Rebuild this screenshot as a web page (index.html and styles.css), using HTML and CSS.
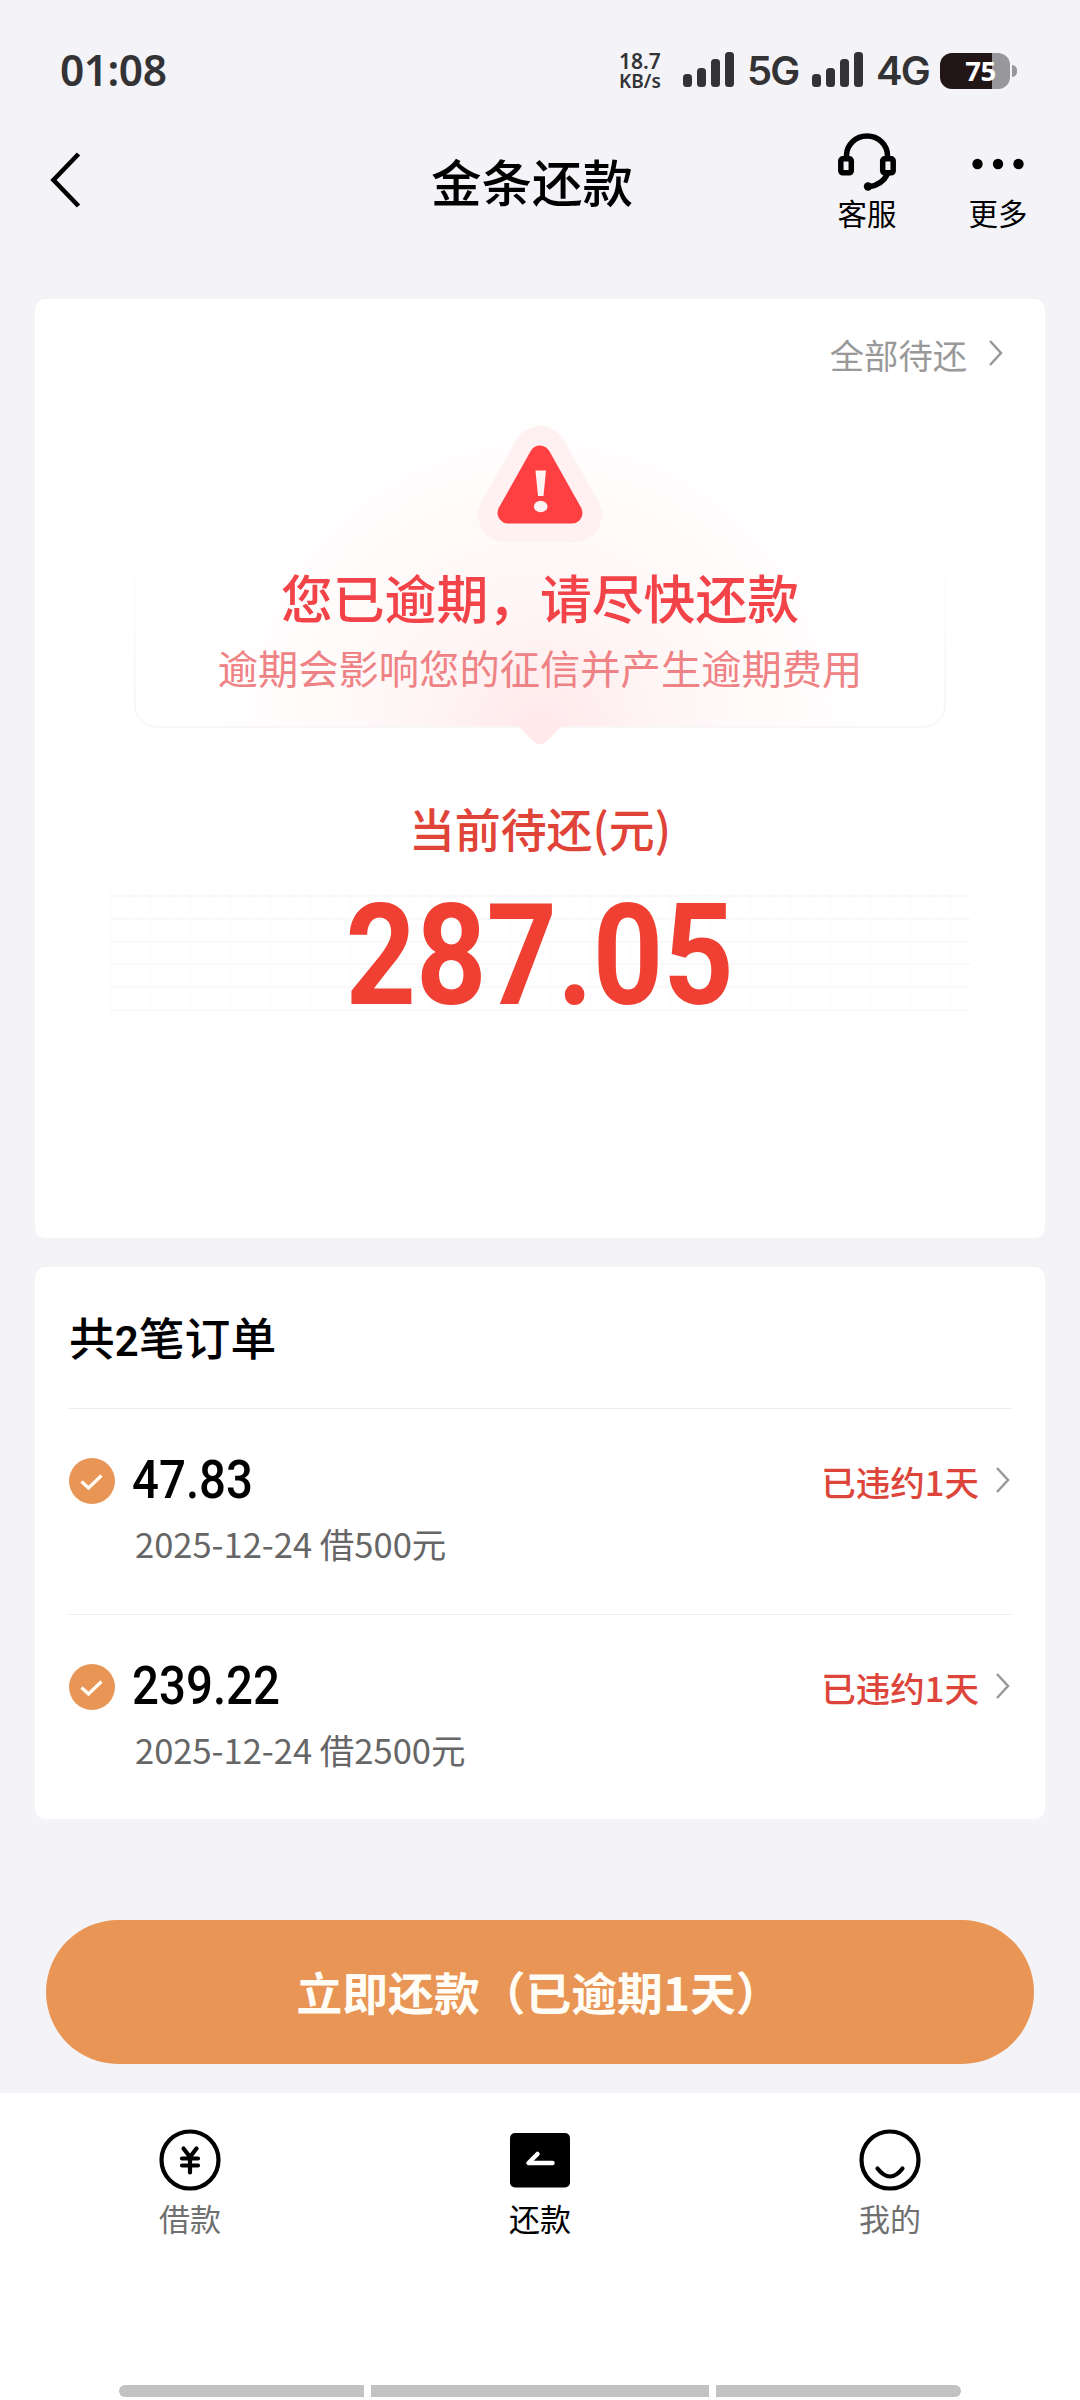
FILE: index.html
```html
<!DOCTYPE html>
<html lang="zh-CN">
<head>
<meta charset="utf-8">
<title>金条还款</title>
<link rel="stylesheet" href="styles.css">
</head>
<body>
<div class="app">
  <div class="status-bar">
    <span class="clock">01:08</span>
    <span class="net-speed"><span>18.7</span><span class="unit">KB/s</span></span>
    <svg class="signal" width="51" height="36" viewBox="0 0 51 36"><g fill="#333336"><rect x="0" y="22" width="9" height="13" rx="3.5"/><rect x="14" y="16" width="9" height="19" rx="3.5"/><rect x="28" y="7" width="9" height="28" rx="3.5"/><rect x="42" y="0" width="9" height="35" rx="3.5"/></g></svg>
    <span class="net-type">5G</span>
    <svg class="signal second" width="51" height="36" viewBox="0 0 51 36"><g fill="#333336"><rect x="0" y="22" width="9" height="13" rx="3.5"/><rect x="14" y="16" width="9" height="19" rx="3.5"/><rect x="28" y="7" width="9" height="28" rx="3.5"/><rect x="42" y="0" width="9" height="35" rx="3.5"/></g></svg>
    <span class="net-type">4G</span>
    <span class="battery"><span class="battery-level">75</span></span>
    <span class="battery-tip"></span>
  </div>

  <header class="nav">
    <svg class="back" width="32" height="56" viewBox="0 0 32 56"><path d="M28.500 2 3.500 28l25 26" fill="none" stroke="#000" stroke-width="4.600"/></svg>
    <h1 class="nav-title">金条还款</h1>
    <div class="nav-action service">
      <svg width="60" height="60" viewBox="0 0 60 60" fill="none" stroke="#000" stroke-width="5.500"><path d="M9.500 25v-1.500a20.500 19.500 0 0 1 41 0V25"/><rect x="3.800" y="26.800" width="10.500" height="14" rx="2"/><rect x="45.700" y="26.800" width="10.500" height="14" rx="2"/><path d="M50.500 42C47 49 41 53.500 32 54.800"/><circle cx="31" cy="54.500" r="4.200" fill="#000" stroke="none"/></svg>
      <span>客服</span>
    </div>
    <div class="nav-action more">
      <svg width="60" height="60" viewBox="0 0 60 60"><circle cx="9.500" cy="32" r="5.200"/><circle cx="30" cy="32" r="5.200"/><circle cx="50.500" cy="32" r="5.200"/></svg>
      <span>更多</span>
    </div>
  </header>

  <section class="card summary">
    <a class="all-due">全部待还<svg width="16" height="28" viewBox="0 0 16 28"><path d="M2 2l11 12L2 26" fill="none" stroke="#999" stroke-width="2.500"/></svg></a>
    <div class="alert">
      <svg class="alert-bg" width="820" height="334" viewBox="0 0 820 334">
        <defs>
          <radialGradient id="glow" gradientUnits="userSpaceOnUse" cx="410" cy="322" r="340">
            <stop offset="0" stop-color="#ffe8ea"/><stop offset=".35" stop-color="#fff5f5"/><stop offset=".7" stop-color="#fffbfb"/><stop offset="1" stop-color="#fff"/>
          </radialGradient>
          <linearGradient id="edge" x1="0" y1="0" x2="0" y2="1"><stop offset="0" stop-color="#f8f7f7" stop-opacity="0"/><stop offset="1" stop-color="#f8f6f6"/></linearGradient>
        </defs>
        <path d="M5 0h810v294a22 22 0 0 1-22 22H431l-15 15q-6 5-12 0l-15-15H27a22 22 0 0 1-22-22z" fill="url(#glow)"/>
        <path d="M5 120v174a22 22 0 0 0 22 22H389M431 316H793a22 22 0 0 0 22-22V120" fill="none" stroke="url(#edge)" stroke-width="2"/>
      </svg>
      <svg class="alert-icon" width="124" height="118" viewBox="0 0 124 118">
        <path d="M62 27 27 89h70z" fill="#fff0f1" stroke="#fff0f1" stroke-width="54" stroke-linejoin="round"/>
        <path d="M62 30 30 87h64z" fill="#ff4043" stroke="#ff4043" stroke-width="21" stroke-linejoin="round"/>
        <path d="M57.500 44.500h10.500l-2.500 25.500h-5.500z" fill="#fff3f3"/><ellipse cx="62.700" cy="80.500" rx="6.800" ry="5.800" fill="#fff3f3"/>
      </svg>
      <p class="alert-title">您已逾期，请尽快还款</p>
      <p class="alert-sub">逾期会影响您的征信并产生逾期费用</p>
    </div>
    <p class="due-label">当前待还(元)</p>
    <div class="due-amount"><span>287.05</span></div>
  </section>

  <section class="card orders">
    <h2 class="orders-title">共<b>2</b>笔订单</h2>
    <div class="order">
      <div class="order-main">
        <svg class="check" width="46" height="46" viewBox="0 0 46 46"><circle cx="23" cy="23" r="23" fill="#e99556"/><path d="M12.500 23.500 19.500 30 32.500 17.500" fill="none" stroke="#fffdf5" stroke-width="3.200"/></svg>
        <span class="order-amount">47.83</span>
        <span class="order-status">已违约1天</span>
        <svg class="chevron" width="16" height="28" viewBox="0 0 16 28"><path d="M2 2l11 12L2 26" fill="none" stroke="#999" stroke-width="2.500"/></svg>
      </div>
      <p class="order-date">2025-12-24 借500元</p>
    </div>
    <div class="order">
      <div class="order-main">
        <svg class="check" width="46" height="46" viewBox="0 0 46 46"><circle cx="23" cy="23" r="23" fill="#e99556"/><path d="M12.500 23.500 19.500 30 32.500 17.500" fill="none" stroke="#fffdf5" stroke-width="3.200"/></svg>
        <span class="order-amount">239.22</span>
        <span class="order-status">已违约1天</span>
        <svg class="chevron" width="16" height="28" viewBox="0 0 16 28"><path d="M2 2l11 12L2 26" fill="none" stroke="#999" stroke-width="2.500"/></svg>
      </div>
      <p class="order-date">2025-12-24 借2500元</p>
    </div>
  </section>

  <button class="repay">立即还款（已逾期1天）</button>

  <footer class="bottom">
    <nav class="tabs">
      <div class="tab">
        <svg width="62" height="62" viewBox="0 0 62 62" fill="none" stroke="#000" stroke-width="4.200"><circle cx="31" cy="31" r="28.500"/><path d="M24.500 19.500l6.500 8.500 6.500-8.500M31 28v15.500M23 29.500h16M23 36.500h16" stroke-linecap="round"/></svg>
        <span>借款</span>
      </div>
      <div class="tab active">
        <svg width="62" height="62" viewBox="0 0 62 62"><rect x="1" y="4" width="60" height="54.500" rx="5"/><path d="M28.500 25 19.500 34H43.500" fill="none" stroke="#fff" stroke-width="4.500" stroke-linecap="round" stroke-linejoin="round"/></svg>
        <span>还款</span>
      </div>
      <div class="tab">
        <svg width="62" height="62" viewBox="0 0 62 62" fill="none" stroke="#000" stroke-width="4.200"><circle cx="31" cy="31" r="28.500"/><path d="M18.500 39.500q12.500 16 25 0" stroke-linecap="round"/></svg>
        <span>我的</span>
      </div>
    </nav>
    <div class="gesture"><i></i><i></i><i></i></div>
  </footer>
</div>
</body>
</html>
```
FILE: styles.css
```css
* { box-sizing: border-box; margin: 0; padding: 0; }
body { background: #f3f3f8; color: #000; font-family: "Noto Sans CJK SC", sans-serif; }
svg { display: block; flex: none; }
.app { width: 1080px; height: 2400px; display: flex; flex-direction: column; overflow: hidden; }

.status-bar { height: 123px; padding: 18px 63px 0 60px; display: flex; align-items: flex-start; color: #333336; font-family: "Noto Sans", sans-serif; }
.clock { font-size: 42.500px; font-weight: 600; line-height: 104px; letter-spacing: -.5px; }
.net-speed { margin-left: auto; margin-top: 32px; display: flex; flex-direction: column; width: 45px; font: 600 21px/22px "Noto Sans", sans-serif; }
.net-speed .unit { font-size: 19px; line-height: 19px; }
.signal { margin: 34px 0 0 19px; }
.signal.second { margin-left: 13px; }
.net-type { width: 52px; margin-left: 13px; font: 600 40px/105px Inter, sans-serif; letter-spacing: -2px; white-space: nowrap; }
.battery { width: 70px; height: 36px; margin: 35px 0 0 12px; border-radius: 12px; background: linear-gradient(90deg, #211516 52px, #98979c 52px); display: flex; }
.battery-level { width: 100%; padding-left: 11px; text-align: center; color: #fff; font-size: 27.500px; font-weight: 700; line-height: 36px; letter-spacing: -.5px; }
.battery-tip { width: 5px; height: 12px; margin: 47px 0 0 2px; border-radius: 0 5px 5px 0; background: #98979c; }

.nav { height: 176px; display: flex; align-items: flex-start; padding: 0 52px 0 50px; }
.back { margin-top: 29px; }
.nav-title { margin: 27px 0 0 349px; font-size: 50.500px; font-weight: 500; line-height: 60px; }
.nav-action { margin-top: 9px; display: flex; flex-direction: column; align-items: center; gap: 2px; font-size: 29.500px; line-height: 36px; }
.service { margin-left: auto; }
.more { margin-left: 71px; }

.card { width: 1010px; margin: 0 auto; background: #fff; border-radius: 10px; }
.summary { height: 939px; padding-top: 35px; flex: none; display: flex; flex-direction: column; align-items: center; }
.all-due { align-self: flex-end; margin-right: 41px; display: flex; gap: 21px; font-size: 34.300px; line-height: 40px; color: #999; }
.all-due svg { margin-top: 5px; }
.alert { position: relative; width: 810px; height: 353px; padding-top: 52px; display: flex; flex-direction: column; align-items: center; }
.alert-bg { position: absolute; left: -5px; top: 37px; }
.alert-icon, .alert-title, .alert-sub { position: relative; }
.alert-title { margin-top: 23px; font-size: 51.800px; font-weight: 500; line-height: 60px; color: #f24348; }
.alert-sub { margin-top: 18px; font-size: 40.300px; line-height: 44px; color: #ee8284; }
.due-label { margin-top: 73px; font-size: 45.900px; font-weight: 500; line-height: 54px; color: #e04338; }
.due-amount { width: 860px; height: 126px; margin-top: 36px; text-align: center; font: 700 141px/132px Roboto, sans-serif; color: #ef4033;
  background: repeating-linear-gradient(180deg, transparent 0 5px, #f9f9f9 5px 7px, transparent 7px 22.800px), repeating-linear-gradient(90deg, #fdfdfd 0 2px, transparent 2px 20px); }
.due-amount span { display: inline-block; transform: scaleX(.872); }

.orders { height: 552px; margin-top: 29px; padding: 0 34px; flex: none; }
.orders-title { height: 142px; border-bottom: 1px solid #ebebeb; font-size: 45.800px; font-weight: 500; line-height: 139px; }
.orders-title b { font: 600 42px Roboto, sans-serif; }
.order { height: 205px; padding-top: 42px; }
.order + .order { border-top: 1px solid #ebebeb; }
.order-main { height: 60px; display: flex; align-items: center; }
.order-amount { margin-left: 17px; margin-top: -2px; font: 500 53px/60px Roboto, sans-serif; transform: scaleX(.895); transform-origin: 0 50%; }
.order-status { margin-left: auto; font-size: 34.500px; font-weight: 500; color: #dd453b; }
.chevron { margin: -2px 0 0 16px; }
.order-date { margin-top: 12px; padding-left: 66px; font-size: 34.500px; line-height: 40px; color: #666; }

.repay { flex: none; width: 988px; height: 144px; margin: 101px auto 0; border: 0; border-radius: 72px; background: #e99556; color: #fffdf6; font: 700 45.800px/138px "Noto Sans CJK SC", sans-serif; padding: 0 2px 2px 0; }
.bottom { flex: 1; margin-top: 29px; background: #fff; display: flex; flex-direction: column; align-items: center; }
.tabs { width: 1050px; display: grid; grid-template-columns: repeat(3, 1fr); padding-top: 36px; }
.tab { display: flex; flex-direction: column; align-items: center; gap: 9px; font-size: 31px; line-height: 36px; color: #707070; }
.tab.active { color: #000; }
.gesture { width: 842px; height: 12px; margin: auto 0 3px; display: grid; grid-template-columns: 245px 338px 245px; gap: 7px; }
.gesture i { background: #c2c2c2; }
.gesture i:first-child { border-radius: 6px 0 0 6px; }
.gesture i:last-child { border-radius: 0 6px 6px 0; }
```
